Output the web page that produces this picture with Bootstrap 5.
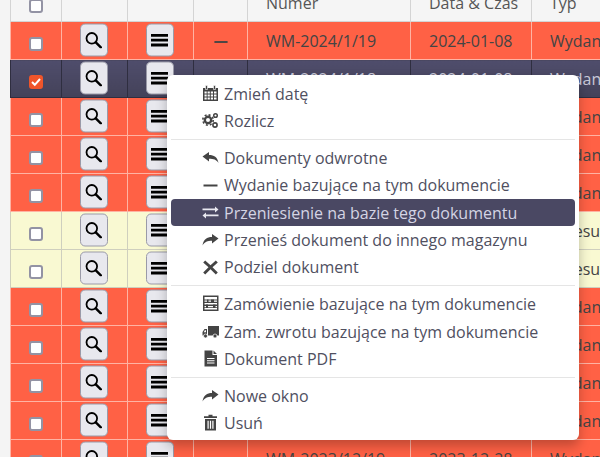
<!DOCTYPE html>
<html lang="pl"><head><meta charset="utf-8"><title>Dokumenty</title>
<link href="https://cdn.jsdelivr.net/npm/bootstrap@5.3.0/dist/css/bootstrap.min.css" rel="stylesheet">
<style>
html,body{height:457px;overflow:hidden;background:#f4f4f4}
body{font-family:"Open Sans","Noto Sans",sans-serif;font-size:16px;color:#444;position:relative}
.page-wrap{padding-left:10px;margin-top:-17px;width:720px}
.doc-table{table-layout:fixed;width:710px;margin:0;border-collapse:collapse;--bs-table-bg:transparent;--bs-table-color:#444}
.doc-table th,.doc-table td{height:38px;padding:0 18px;vertical-align:middle;border:1px solid #ddd;font-weight:400;white-space:nowrap;overflow:hidden;box-shadow:none;line-height:24px}
.doc-table th{background:#f5f5f5;border-color:#d4d4d4;color:#555}
.doc-table td.mid,.doc-table th.mid{padding:0;text-align:center}
.r-red td{background:#ff6145;border-color:#ffb3a3}
.r-yel td{background:#f9f9d2;border-color:#cfcfbe}
.r-sel td{background:linear-gradient(#4f4d6c,#444259);border-color:#2f2e40;color:#c8c8d8}
.tick{display:block;width:14px;height:14px;margin:7px auto 0;background:#fff;border:2px solid #9393a4;border-radius:3px}
.tick-on{background:#f0552a;border-color:#f0552a;position:relative}
.tick-on svg{position:absolute;left:-1px;top:-1px;width:12px;height:12px}
.tool{display:flex;align-items:center;justify-content:center;width:28px;height:33px;padding:0;margin:0 auto;background:#e8e8ee;border:1px solid #9a9aa8;border-radius:5px;color:#000;transform:translate(-1px,-.5px)}
.tool svg{width:17px;height:17px}
.dash{display:block;width:16px;height:16px;margin:3px auto 0;color:#444}
.ctx{display:block;position:absolute;left:167px;top:75px;width:412px;height:365px;margin:0;padding:5px 4px;background:#fff;border:0;border-radius:6px;box-shadow:0 6px 12px rgba(0,0,0,.25);font-size:16px;--bs-dropdown-item-padding-y:0}
.ctx .dropdown-item{display:flex;align-items:center;height:27.4px;padding:0 0 0 32px;color:#50505f;border-radius:4px;position:relative}
.ctx .dropdown-item svg{position:absolute;left:31px;top:5px;width:17px;height:17px;color:#444}
.ctx .dropdown-item span{margin-left:21px}
.ctx .dropdown-item.active{background:#4a4863;color:#d4d4e4}
.ctx .dropdown-item.active svg{color:#e8e8f0}
.ctx .dropdown-divider{margin:4.2px 0;border-color:#e5e5e5;opacity:1}
</style></head><body>
<svg width="0" height="0" class="d-none" aria-hidden="true">
<symbol id="i-zoom" viewBox="0 0 17 17"><circle cx="6.8" cy="6.800" r="5.300" fill="none" stroke="currentColor" stroke-width="1.800"/><path d="M10.800 10.800l5 5" stroke="currentColor" stroke-width="2.400" stroke-linecap="round"/></symbol>
<symbol id="i-menu" viewBox="0 0 17 17"><path d="M0 2.500h17v2.800H0zM0 7.300h17v2.800H0zM0 12.100h17v2.800H0z" fill="currentColor"/></symbol>
<symbol id="i-cal" viewBox="0 0 17 17"><path fill="currentColor" d="M1 3h15v13H1z"/><path fill="#fff" d="M2.500 6.500h2.200v2H2.500zM5.600 6.500h2.200v2H5.600zM8.800 6.500H11v2H8.800zM12 6.500h2.500v2H12zM2.500 9.500h2.200v2H2.500zM5.600 9.500h2.200v2H5.600zM8.800 9.500H11v2H8.800zM12 9.500h2.500v2H12zM2.500 12.500h2.200v2H2.500zM5.600 12.500h2.200v2H5.600zM8.800 12.500H11v2H8.800zM12 12.500h2.500v2H12z"/><path fill="currentColor" stroke="#fff" stroke-width=".6" d="M3.500.5h2v4h-2zM11.500.5h2v4h-2z"/></symbol>
<symbol id="i-cogs" viewBox="0 0 17 17"><circle cx="6" cy="8" r="3.200" fill="none" stroke="currentColor" stroke-width="2.400"/><circle cx="6" cy="8" r="5.200" fill="none" stroke="currentColor" stroke-width="1.600" stroke-dasharray="2 2.080"/><circle cx="13.500" cy="3.500" r="1.800" fill="none" stroke="currentColor" stroke-width="1.500"/><circle cx="13" cy="13" r="2.100" fill="none" stroke="currentColor" stroke-width="1.600"/></symbol>
<symbol id="i-back" viewBox="0 0 17 17"><path fill="currentColor" d="M.5 7.500L7 3v3c5 0 8.500 2 9.500 8-2-3.500-5-4.300-9.500-4.300V12.500z"/></symbol>
<symbol id="i-fwd" viewBox="0 0 17 17"><path fill="currentColor" d="M16.500 7.500L10 3v3c-5 0-8.500 2.300-9.500 8.500 2-3.500 5-4.800 9.500-4.800V12.500z"/></symbol>
<symbol id="i-minus" viewBox="0 0 17 17"><path fill="currentColor" d="M1.500 7.500h14v2h-14z"/></symbol>
<symbol id="i-swap" viewBox="0 0 17 17"><path fill="currentColor" d="M.5 4.500h12.500V2.500l3.500 3-3.500 3V6.300H.5zM16.500 10.500H4V8.500L.5 11.500 4 14.500v-2.200h12.500z"/></symbol>
<symbol id="i-x" viewBox="0 0 17 17"><path fill="currentColor" d="M3.200 1.500L8.500 6.300l5.300-4.800 2 2L10.500 8.300l5.300 5.300-2 2-5.300-5.300-5.300 5.300-2-2 5.300-5.300L1.200 3.500z"/></symbol>
<symbol id="i-abacus" viewBox="0 0 17 17"><path fill="currentColor" d="M1 .5h15.500v15.500H1z"/><path fill="#fff" d="M2.500 2h12.500v2.500H2.500zM2.500 5.500h12.500v1.200H2.500zM2.500 8h12.500v1.500H2.500zM2.500 11h12.500v1.200H2.500zM2.500 13h12.500v1.500H2.500z"/><path fill="currentColor" d="M5 4.500h1.500v3.200H5zM9 4.500h3v3.200H9zM4 9.500h2v3.500H4zM11 9.500h2.500v3.500H11z"/></symbol>
<symbol id="i-truck" viewBox="0 0 17 17"><path fill="currentColor" d="M6 3h11v9.500H6zM5 6H2.500L.5 9v3.500H5z"/><circle cx="3.500" cy="13" r="2" fill="currentColor" stroke="#fff" stroke-width=".7"/><circle cx="13" cy="13" r="2" fill="currentColor" stroke="#fff" stroke-width=".7"/><path fill="#fff" d="M2.800 7.200H4v2H1.800z"/></symbol>
<symbol id="i-file" viewBox="0 0 17 17"><path fill="currentColor" d="M2.500.5h8v4.500h4.500v11.500H2.500zM11.500.5l3.500 3.500h-3.500z"/><path fill="#fff" d="M5 8h7.500v1H5zM5 10.300h7.500v1H5zM5 12.600h7.500v1H5z"/></symbol>
<symbol id="i-trash" viewBox="0 0 17 17"><path fill="currentColor" d="M6.500.8h4v1.400H15V4H2V2.200h4.500zM3 5h11v11.500H3z"/><path fill="#fff" d="M5.500 6.800h1.200v8H5.500zM7.900 6.800h1.200v8H7.900zM10.300 6.800h1.200v8h-1.200z"/></symbol>
</svg>
<div class="page-wrap">
<table class="table doc-table">
<colgroup><col style="width:51px"><col style="width:66px"><col style="width:66px"><col style="width:54px"><col style="width:163px"><col style="width:121px"><col></colgroup>
<thead><tr><th class="mid"><span class="tick"></span></th><th></th><th></th><th></th><th>Numer</th><th>Data &amp; Czas</th><th>Typ</th></tr></thead>
<tbody>
<tr class="r-red"><td class="mid"><span class="tick"></span></td><td class="mid"><button class="tool"><svg><use href="#i-zoom"/></svg></button></td><td class="mid"><button class="tool"><svg><use href="#i-menu"/></svg></button></td><td class="mid"><svg class="dash"><use href="#i-minus"/></svg></td><td>WM-2024/1/19</td><td>2024-01-08</td><td>Wydanie</td></tr>
<tr class="r-sel"><td class="mid"><span class="tick tick-on"><svg viewBox="0 0 12 12"><path d="M2 6l2.800 2.800L10 3" fill="none" stroke="#fff" stroke-width="2"/></svg></span></td><td class="mid"><button class="tool"><svg><use href="#i-zoom"/></svg></button></td><td class="mid"><button class="tool"><svg><use href="#i-menu"/></svg></button></td><td></td><td>WM-2024/1/18</td><td>2024-01-08</td><td>Wydanie</td></tr>
<tr class="r-red"><td class="mid"><span class="tick"></span></td><td class="mid"><button class="tool"><svg><use href="#i-zoom"/></svg></button></td><td class="mid"><button class="tool"><svg><use href="#i-menu"/></svg></button></td><td></td><td></td><td></td><td>Wydanie</td></tr>
<tr class="r-red"><td class="mid"><span class="tick"></span></td><td class="mid"><button class="tool"><svg><use href="#i-zoom"/></svg></button></td><td class="mid"><button class="tool"><svg><use href="#i-menu"/></svg></button></td><td></td><td></td><td></td><td>Wydanie</td></tr>
<tr class="r-red"><td class="mid"><span class="tick"></span></td><td class="mid"><button class="tool"><svg><use href="#i-zoom"/></svg></button></td><td class="mid"><button class="tool"><svg><use href="#i-menu"/></svg></button></td><td></td><td></td><td></td><td>Wydanie</td></tr>
<tr class="r-yel"><td class="mid"><span class="tick"></span></td><td class="mid"><button class="tool"><svg><use href="#i-zoom"/></svg></button></td><td class="mid"><button class="tool"><svg><use href="#i-menu"/></svg></button></td><td></td><td></td><td></td><td>Przesunięcie</td></tr>
<tr class="r-yel"><td class="mid"><span class="tick"></span></td><td class="mid"><button class="tool"><svg><use href="#i-zoom"/></svg></button></td><td class="mid"><button class="tool"><svg><use href="#i-menu"/></svg></button></td><td></td><td></td><td></td><td>Przesunięcie</td></tr>
<tr class="r-red"><td class="mid"><span class="tick"></span></td><td class="mid"><button class="tool"><svg><use href="#i-zoom"/></svg></button></td><td class="mid"><button class="tool"><svg><use href="#i-menu"/></svg></button></td><td></td><td></td><td></td><td>Wydanie</td></tr>
<tr class="r-red"><td class="mid"><span class="tick"></span></td><td class="mid"><button class="tool"><svg><use href="#i-zoom"/></svg></button></td><td class="mid"><button class="tool"><svg><use href="#i-menu"/></svg></button></td><td></td><td></td><td></td><td>Wydanie</td></tr>
<tr class="r-red"><td class="mid"><span class="tick"></span></td><td class="mid"><button class="tool"><svg><use href="#i-zoom"/></svg></button></td><td class="mid"><button class="tool"><svg><use href="#i-menu"/></svg></button></td><td></td><td></td><td></td><td>Wydanie</td></tr>
<tr class="r-red"><td class="mid"><span class="tick"></span></td><td class="mid"><button class="tool"><svg><use href="#i-zoom"/></svg></button></td><td class="mid"><button class="tool"><svg><use href="#i-menu"/></svg></button></td><td></td><td></td><td></td><td>Wydanie</td></tr>
<tr class="r-red"><td class="mid"><span class="tick"></span></td><td class="mid"><button class="tool"><svg><use href="#i-zoom"/></svg></button></td><td class="mid"><button class="tool"><svg><use href="#i-menu"/></svg></button></td><td></td><td>WM-2023/12/19</td><td>2023-12-28</td><td>Wydanie</td></tr>
</tbody></table></div>
<ul class="dropdown-menu ctx list-unstyled">
<li><a class="dropdown-item" href="#"><svg><use href="#i-cal"/></svg><span>Zmień datę</span></a></li>
<li><a class="dropdown-item" href="#"><svg><use href="#i-cogs"/></svg><span>Rozlicz</span></a></li>
<li><hr class="dropdown-divider"></li>
<li><a class="dropdown-item" href="#"><svg><use href="#i-back"/></svg><span>Dokumenty odwrotne</span></a></li>
<li><a class="dropdown-item" href="#"><svg><use href="#i-minus"/></svg><span>Wydanie bazujące na tym dokumencie</span></a></li>
<li><a class="dropdown-item active" href="#"><svg><use href="#i-swap"/></svg><span>Przeniesienie na bazie tego dokumentu</span></a></li>
<li><a class="dropdown-item" href="#"><svg><use href="#i-fwd"/></svg><span>Przenieś dokument do innego magazynu</span></a></li>
<li><a class="dropdown-item" href="#"><svg><use href="#i-x"/></svg><span>Podziel dokument</span></a></li>
<li><hr class="dropdown-divider"></li>
<li><a class="dropdown-item" href="#"><svg><use href="#i-abacus"/></svg><span>Zamówienie bazujące na tym dokumencie</span></a></li>
<li><a class="dropdown-item" href="#"><svg><use href="#i-truck"/></svg><span>Zam. zwrotu bazujące na tym dokumencie</span></a></li>
<li><a class="dropdown-item" href="#"><svg><use href="#i-file"/></svg><span>Dokument PDF</span></a></li>
<li><hr class="dropdown-divider"></li>
<li><a class="dropdown-item" href="#"><svg><use href="#i-fwd"/></svg><span>Nowe okno</span></a></li>
<li><a class="dropdown-item" href="#"><svg><use href="#i-trash"/></svg><span>Usuń</span></a></li>
</ul>
</body></html>
